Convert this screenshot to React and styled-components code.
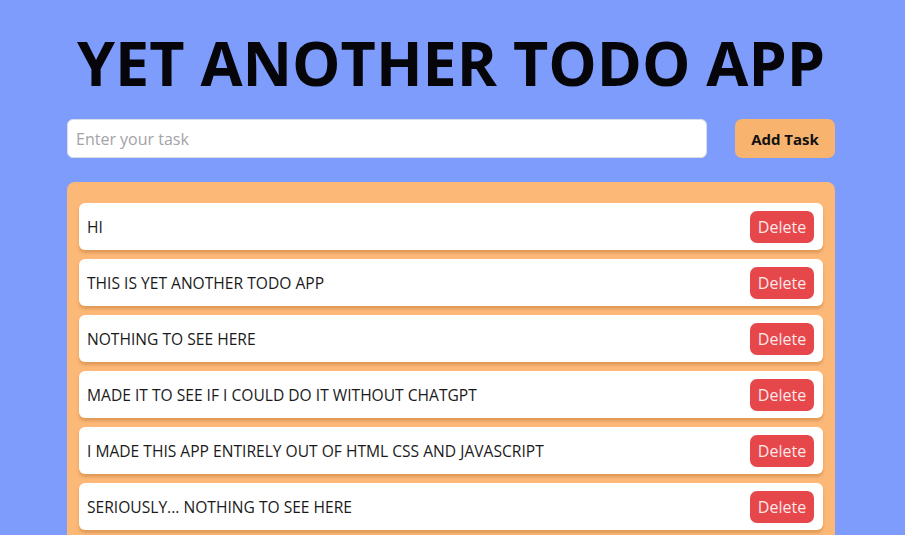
import React from 'react';
import styled, { createGlobalStyle } from 'styled-components';

const GlobalStyle = createGlobalStyle`
  body {
    margin: 0;
    background-color: #7d9cfb;
    font-family: "Open Sans", "Noto Sans", sans-serif;
  }
`;

const Page = styled.main`
  width: 768px;
  margin: 0 auto;
  padding: 25px 3px 0 0;
`;

const Title = styled.h1`
  margin: 0 0 18px;
  text-align: center;
  font-size: 61px;
  line-height: 76px;
  font-weight: 700;
  color: #05050a;
`;

const Form = styled.form`
  display: flex;
  align-items: center;
  gap: 28px;
  margin-bottom: 24px;
`;

const TaskInput = styled.input`
  flex: 1;
  height: 39px;
  box-sizing: border-box;
  border: 1px solid #d8dde8;
  border-radius: 6px;
  padding: 0 8px;
  font-family: inherit;
  font-size: 16px;
  background: #fff;
  outline: none;

  &::placeholder {
    color: #a3a3a8;
  }
`;

const AddButton = styled.button`
  width: 100px;
  height: 39px;
  border: none;
  border-radius: 7px;
  background: #f8b46e;
  font-family: inherit;
  font-size: 15px;
  font-weight: 700;
  color: #111;
`;

const List = styled.ul`
  list-style: none;
  margin: 0;
  padding: 21px 12px 20px;
  display: flex;
  flex-direction: column;
  gap: 9px;
  background: #fbb877;
  border-radius: 8px;
`;

const Item = styled.li`
  display: flex;
  align-items: center;
  justify-content: space-between;
  height: 47px;
  padding: 0 9px 0 8px;
  background: #fff;
  border-radius: 6px;
  box-shadow: 0 3px 3px rgba(190, 120, 50, 0.45);
  font-size: 15.6px;
  color: #1a1a1a;
`;

const DeleteButton = styled.button`
  width: 64px;
  height: 32px;
  border: none;
  border-radius: 7px;
  background: #e5474b;
  color: #fde8e8;
  font-family: inherit;
  font-size: 16px;
`;

const tasks = [
  'HI',
  'THIS IS YET ANOTHER TODO APP',
  'NOTHING TO SEE HERE',
  'MADE IT TO SEE IF I COULD DO IT WITHOUT CHATGPT',
  'I MADE THIS APP ENTIRELY OUT OF HTML CSS AND JAVASCRIPT',
  'SERIOUSLY... NOTHING TO SEE HERE',
];

const App = () => (
  <>
    <GlobalStyle />
    <Page>
      <Title>YET ANOTHER TODO APP</Title>
      <Form onSubmit={(e) => e.preventDefault()}>
        <TaskInput placeholder="Enter your task" />
        <AddButton type="submit">Add Task</AddButton>
      </Form>
      <List>
        {tasks.map((task) => (
          <Item key={task}>
            <span>{task}</span>
            <DeleteButton type="button">Delete</DeleteButton>
          </Item>
        ))}
      </List>
    </Page>
  </>
);

export default App;
